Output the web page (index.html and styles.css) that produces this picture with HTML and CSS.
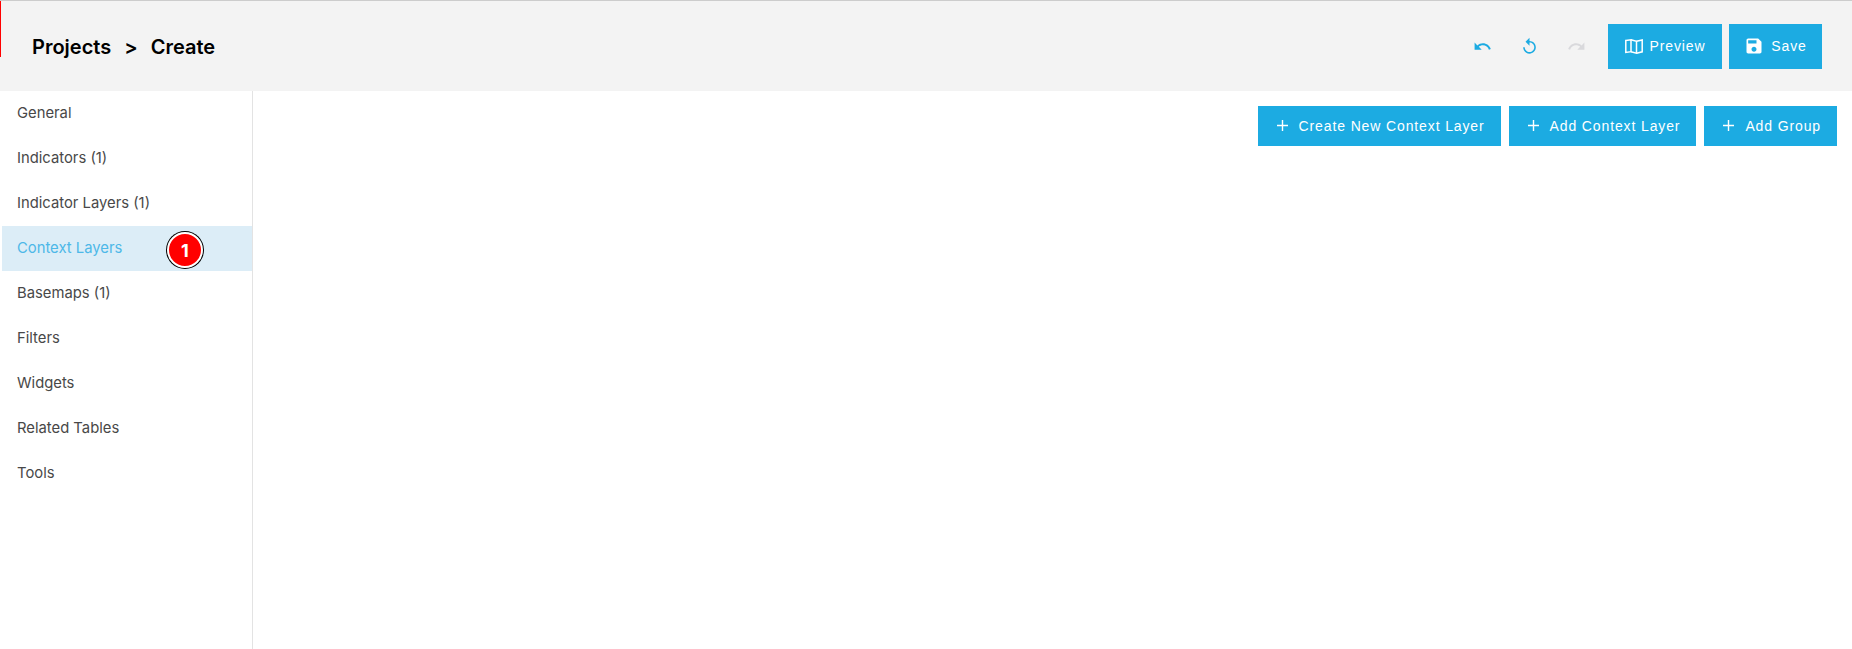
FILE: index.html
```html
<!DOCTYPE html>
<html lang="en">
<head>
    <meta charset="UTF-8">
    <meta name="viewport" content="width=device-width, initial-scale=1.0">
    <title>Projects &gt; Create</title>
    <link rel="stylesheet" href="styles.css">
</head>
<body>
    <div class="marker"></div>

    <!-- Header -->
    <div class="header">
        <div class="crumbs">
            <span>Projects</span>
            <span class="crumb-sep">&gt;</span>
            <span>Create</span>
        </div>
        <div class="actions">
            <span class="icon-btn">
                <svg viewBox="0 0 24 24" width="19" height="19"><path d="M12.5 8c-2.65 0-5.05.99-6.9 2.6L2 7v9h9l-3.62-3.62c1.39-1.16 3.16-1.88 5.12-1.88 3.54 0 6.55 2.31 7.6 5.500l2.370-.78C21.080 11.030 17.150 8 12.500 8z"/></svg>
            </span>
            <span class="icon-btn">
                <svg viewBox="0 0 24 24" width="19" height="19"><path d="M12 5V1L7 6l5 5V7c3.31 0 6 2.69 6 6s-2.69 6-6 6-6-2.69-6-6H4c0 4.42 3.58 8 8 8s8-3.58 8-8-3.58-8-8-8z"/></svg>
            </span>
            <span class="icon-btn disabled">
                <svg viewBox="0 0 24 24" width="19" height="19"><path d="M18.4 10.6C16.55 8.99 14.15 8 11.5 8c-4.65 0-8.58 3.03-9.96 7.22L3.9 16c1.05-3.19 4.05-5.5 7.6-5.5 1.95 0 3.73.72 5.12 1.88L13 16h9V7l-3.6 3.6z"/></svg>
            </span>
            <button class="btn btn-preview">
                <svg viewBox="0 0 18 15" width="18" height="15" fill="none" stroke="currentColor" stroke-width="1.500"><path d="M.8 1.500 6 .8v11.900l-5.200.8z"/><path d="M6 .8l5.500 1.500v11.900L6 12.700"/><path d="M11.500 2.300l5.700-1.300v11.800l-5.700 1.400"/></svg>
                Preview
            </button>
            <button class="btn btn-save">
                <svg viewBox="0 0 24 24" width="20" height="20"><path fill="currentColor" d="M17 3H5c-1.110 0-2 .9-2 2v14c0 1.100.89 2 2 2h14c1.100 0 2-.9 2-2V7l-4-4zm-5 16c-1.660 0-3-1.340-3-3s1.340-3 3-3 3 1.340 3 3-1.340 3-3 3zm3-10H5V5h10v4z"/></svg>
                Save
            </button>
        </div>
    </div>

    <div class="main">
        <!-- Menu lateral -->
        <div class="sidebar">
            <div class="item">General</div>
            <div class="item">Indicators (1)</div>
            <div class="item">Indicator Layers (1)</div>
            <div class="item active">
                Context Layers
                <span class="badge">1</span>
            </div>
            <div class="item">Basemaps (1)</div>
            <div class="item">Filters</div>
            <div class="item">Widgets</div>
            <div class="item">Related Tables</div>
            <div class="item">Tools</div>
        </div>

        <div class="content">
            <div class="toolbar">
                <button class="btn">
                    <svg class="plus" viewBox="0 0 11 11" width="11" height="11"><path d="M5.500 0v11M0 5.500h11" stroke="currentColor" stroke-width="1.400"/></svg>
                    Create New Context Layer
                </button>
                <button class="btn">
                    <svg class="plus" viewBox="0 0 11 11" width="11" height="11"><path d="M5.500 0v11M0 5.500h11" stroke="currentColor" stroke-width="1.400"/></svg>
                    Add Context Layer
                </button>
                <button class="btn">
                    <svg class="plus" viewBox="0 0 11 11" width="11" height="11"><path d="M5.500 0v11M0 5.500h11" stroke="currentColor" stroke-width="1.400"/></svg>
                    Add Group
                </button>
            </div>
        </div>
    </div>
</body>
</html>
```

FILE: styles.css
```css
html, body {
    height: 100%;
}

body {
    font-family: 'Inter', sans-serif;
    background-color: #ffffff;
    margin: 0;
    padding: 0;
    overflow: hidden;
    position: relative;
}

.marker {
    position: absolute;
    left: 0;
    top: 1px;
    width: 1px;
    height: 56px;
    background-color: #ff0000;
}

.header {
    height: 90px;
    box-sizing: content-box;
    border-top: 1px solid #cccccc;
    background-color: #f3f3f3;
    display: flex;
    align-items: center;
    justify-content: space-between;
    padding: 0 30px 0 32px;
}

.crumbs {
    font-size: 20px;
    font-weight: 600;
    color: #000000;
    display: flex;
    gap: 13px;
    margin-top: 1px;
}

.actions {
    display: flex;
    align-items: center;
    gap: 7px;
}

.icon-btn {
    width: 40px;
    height: 40px;
    display: flex;
    align-items: center;
    justify-content: center;
    fill: #1cabe2;
}

.icon-btn.disabled {
    fill: #d9d9dc;
    margin-right: 5px;
}

.btn {
    background-color: #1cabe2;
    color: #ffffff;
    border: none;
    border-radius: 0;
    font-family: 'Liberation Sans', sans-serif;
    font-size: 14px;
    letter-spacing: 0.875px;
    display: flex;
    align-items: center;
    justify-content: center;
    padding: 0;
}

.btn svg {
    margin-right: 7px;
}

.btn-preview {
    width: 114px;
    height: 45px;
}

.btn-save {
    width: 93px;
    height: 45px;
}

.main {
    display: flex;
    height: calc(100% - 91px);
    padding-left: 2px;
    box-sizing: border-box;
}

.sidebar {
    width: 250px;
    flex-shrink: 0;
    border-right: 1px solid #e3e3e3;
}

.item {
    height: 45px;
    box-sizing: border-box;
    display: flex;
    align-items: center;
    padding: 0 0 2px 15px;
    font-size: 14.8px;
    color: #484848;
    position: relative;
}

.item.active {
    background-color: #dcedf7;
    color: #4db8e8;
}

.badge {
    position: absolute;
    left: 165px;
    top: 6px;
    width: 36px;
    height: 36px;
    box-sizing: border-box;
    border-radius: 50%;
    background-color: #ff0000;
    border: 2px solid #ffffff;
    box-shadow: 0 0 0 1px #000000;
    color: #ffffff;
    font-size: 18px;
    font-weight: 700;
    display: flex;
    align-items: center;
    justify-content: center;
}

.content {
    flex: 1;
}

.toolbar {
    display: flex;
    justify-content: flex-end;
    gap: 8px;
    padding: 15px 15px 0 0;
}

.toolbar .btn {
    height: 40px;
    padding: 0 16px 1px 19px;
}

.toolbar .btn .plus {
    margin-right: 11px;
}
```
